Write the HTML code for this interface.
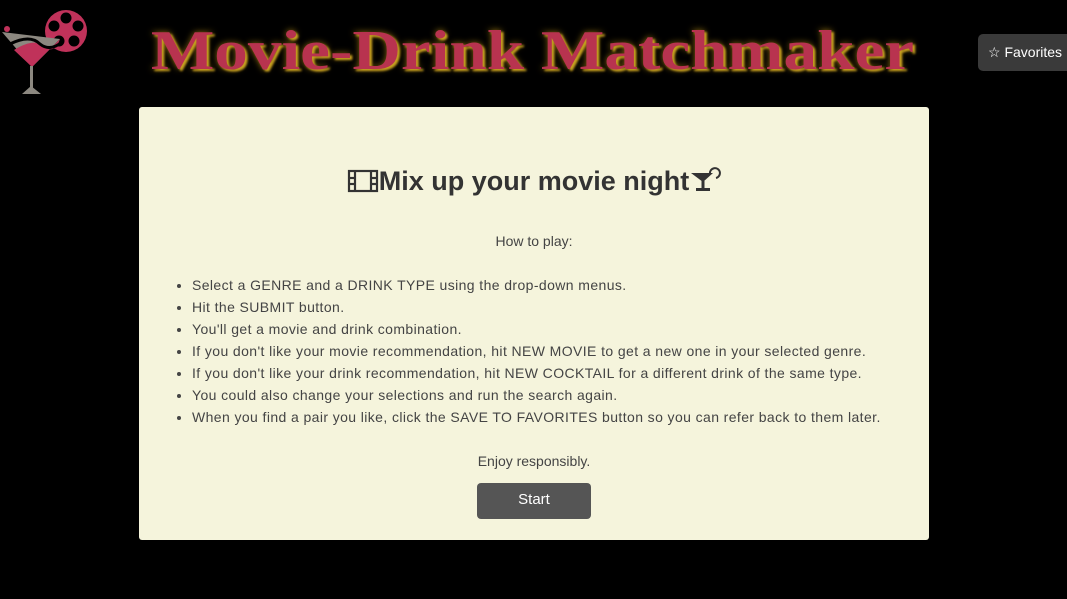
<!DOCTYPE html>
<html><head><meta charset="utf-8"><style>
body{margin:0;width:1067px;height:599px;background:#000;overflow:hidden;font-family:"Liberation Sans",sans-serif;position:relative}
.title{position:absolute;left:150px;top:19px;width:765px;text-align:center;font-family:"Liberation Serif",serif;font-weight:bold;font-size:56px;color:#b8334f;text-shadow:2px 2px 2px #c8a020,0 0 6px #8a6a10;white-space:nowrap;transform:scaleX(1.2);transform-origin:center}
.fav{position:absolute;left:978px;top:34px;width:100px;height:37px;background:#3a3a3a;border-radius:5px;color:#fff;font-size:14px;line-height:37px;padding-left:10px;box-sizing:border-box}
.card{position:absolute;left:139px;top:107px;width:790px;height:433px;background:#f5f4dc;border-radius:3px;color:#444}
h1{margin:0;position:absolute;top:58px;left:0;width:100%;text-align:center;font-size:27px;font-weight:bold;color:#333}
h1 svg{vertical-align:-3px}
.how{position:absolute;top:126px;width:100%;text-align:center;font-size:14px}
ul{position:absolute;top:167px;left:35px;margin:0;padding-left:18px;font-size:14px;line-height:22px;letter-spacing:0.4px}
.enjoy{position:absolute;top:346px;width:100%;text-align:center;font-size:14px}
.btn{position:absolute;left:338px;top:376px;width:114px;height:36px;background:#555;border-radius:4px;color:#fff;text-align:center;line-height:34px;font-size:15px}
</style></head><body>
<svg style="position:absolute;left:0;top:2px" width="100" height="100" viewBox="0 0 100 100">
<circle cx="66" cy="29" r="21" fill="#c0325a"/>
<circle cx="66" cy="16" r="5.5" fill="#000"/><circle cx="78" cy="24" r="5.5" fill="#000"/><circle cx="74" cy="39" r="5.5" fill="#000"/><circle cx="59" cy="39" r="5.5" fill="#000"/><circle cx="54" cy="24" r="5.5" fill="#000"/>
<polygon points="2,30 60,37 32,65" fill="#8c8880"/>
<path d="M14,48 Q35,35 45,45 Q55,52 60,37 L32,65 Z" fill="#c0325a"/>
<path d="M10,42 Q30,32 40,42 Q50,50 62,40" stroke="#000" stroke-width="3" fill="none"/>
<circle cx="7" cy="27" r="3" fill="#c0325a"/>
<rect x="30" y="64" width="3" height="24" fill="#8c8880"/>
<polygon points="22,92 41,92 31,84" fill="#8c8880"/>
</svg>
<div class="title">Movie-Drink Matchmaker</div>
<div class="fav">☆ Favorites</div>
<div class="card">
<h1><svg width="32" height="24" viewBox="0 0 32 24"><g fill="none" stroke="#333" stroke-width="2.2"><rect x="2" y="2" width="28" height="20"/><line x1="8" y1="2" x2="8" y2="22"/><line x1="24" y1="2" x2="24" y2="22"/><line x1="2" y1="9" x2="8" y2="9"/><line x1="2" y1="15" x2="8" y2="15"/><line x1="24" y1="9" x2="30" y2="9"/><line x1="24" y1="15" x2="30" y2="15"/></g></svg>Mix up your movie night<svg width="32" height="28" viewBox="0 0 32 28"><path d="M2,8 H24 L14,17 Z" fill="#333"/><rect x="12.5" y="16" width="3" height="8" fill="#333"/><rect x="7" y="23" width="14" height="3" fill="#333"/><path d="M21,9 A5,5 0 1 1 27,13" fill="none" stroke="#333" stroke-width="2"/></svg></h1>
<div class="how">How to play:</div>
<ul>
<li>Select a GENRE and a DRINK TYPE using the drop-down menus.</li>
<li>Hit the SUBMIT button.</li>
<li>You'll get a movie and drink combination.</li>
<li>If you don't like your movie recommendation, hit NEW MOVIE to get a new one in your selected genre.</li>
<li>If you don't like your drink recommendation, hit NEW COCKTAIL for a different drink of the same type.</li>
<li>You could also change your selections and run the search again.</li>
<li>When you find a pair you like, click the SAVE TO FAVORITES button so you can refer back to them later.</li>
</ul>
<div class="enjoy">Enjoy responsibly.</div>
<div class="btn">Start</div>
</div>
</body></html>
